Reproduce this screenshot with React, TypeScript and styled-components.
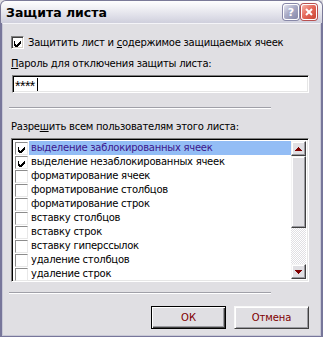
import React from "react";
import styled, { createGlobalStyle } from "styled-components";

const Global = createGlobalStyle`
  html, body { margin: 0; padding: 0; background: #e0dfe3; }
  body { font-family: "DejaVu Sans", Tahoma, sans-serif; }
`;

const Window = styled.div`
  width: 323px;
  height: 337px;
  box-sizing: border-box;
  display: flex;
  flex-direction: column;
  font-family: "DejaVu Sans", Tahoma, sans-serif;
  font-size: 10px;
  letter-spacing: -0.25px;
  color: #000;
`;

const TitleBar = styled.div`
  height: 23px;
  flex: none;
  box-sizing: border-box;
  display: flex;
  align-items: center;
  padding: 0 5px 0 5px;
  border: 1px solid #7b7a98;
  border-bottom: none;
  border-radius: 6px 6px 0 0;
  background: linear-gradient(#fefefe 0%, #f1f1f5 30%, #dedee8 70%, #cfcfdc 100%);
`;

const Title = styled.div`
  flex: 1;
  font-family: "DejaVu Sans", sans-serif;
  font-weight: bold;
  font-size: 12.5px;
  letter-spacing: 0;
  color: #000;
  padding-top: 1px;
`;

const TitleButton = styled.div<{ $kind: "help" | "close" }>`
  width: 16px;
  height: 16px;
  box-sizing: border-box;
  margin-left: 2px;
  border-radius: 3px;
  border: 1px solid #ffffff;
  box-shadow: 0 0 0 1px ${(p) => (p.$kind === "close" ? "#b85050" : "#8888a8")};
  display: flex;
  align-items: center;
  justify-content: center;
  color: #fff;
  font-weight: bold;
  font-size: 11px;
  letter-spacing: 0;
  font-family: "DejaVu Sans", sans-serif;
  background: ${(p) =>
    p.$kind === "close"
      ? "linear-gradient(135deg, #f7b3a8 0%, #e66b5c 45%, #c94434 100%)"
      : "linear-gradient(135deg, #e4e5f0 0%, #a9abc6 45%, #8587a8 100%)"};
`;

const Frame = styled.div`
  flex: 1;
  display: flex;
  border: 2px solid #77769a;
  border-top: none;
`;

const Body = styled.div`
  flex: 1;
  display: flex;
  flex-direction: column;
  background: #e0dfe3;
  border: 1px solid #c8c8d6;
  border-top: 1px solid #f4f4f8;
  padding: 12px 11px 6px 8px;
`;

const CheckRow = styled.label`
  display: flex;
  align-items: center;
  gap: 4px;
  height: 13px;
`;

const Box = styled.span<{ $flat?: boolean }>`
  width: 13px;
  height: 13px;
  flex: none;
  box-sizing: border-box;
  background: #fff;
  display: flex;
  align-items: center;
  justify-content: center;
  border-style: solid;
  border-width: 1px;
  border-color: ${(p) =>
    p.$flat ? "#8c8c8c #e8e8e8 #e8e8e8 #8c8c8c" : "#808080 #ffffff #ffffff #808080"};
  box-shadow: ${(p) => (p.$flat ? "none" : "inset 1px 1px 0 #404040, inset -1px -1px 0 #d4d0c8")};
`;

const Text = styled.span`
  white-space: nowrap;
`;

const FieldLabel = styled.div<{ $top: number }>`
  margin-top: ${(p) => p.$top}px;
  white-space: nowrap;
  line-height: 12px;
`;

const Sunken = styled.div`
  box-sizing: border-box;
  background: #fff;
  border-style: solid;
  border-width: 1px;
  border-color: #808080 #ffffff #ffffff #808080;
  box-shadow: inset 1px 1px 0 #000, inset -1px -1px 0 #e6e6e6;
`;

const PasswordBox = styled(Sunken)`
  margin-top: 5px;
  margin-left: 1px;
  height: 18px;
  width: 297px;
  display: flex;
  align-items: center;
  padding-left: 2px;
`;

const Stars = styled.span`
  font-family: "Liberation Sans", Arial, sans-serif;
  font-size: 14px;
  letter-spacing: -0.5px;
  color: #000;
  line-height: 12px;
  padding-top: 3px;
`;

const Caret = styled.span`
  width: 1px;
  height: 13px;
  background: #000;
  margin-left: 2px;
`;

const Separator = styled.div<{ $top: number }>`
  margin-top: ${(p) => p.$top}px;
  margin-left: -2px;
  width: 262px;
  height: 1px;
  background: #a0a0a8;
  border-bottom: 1px solid #ffffff;
`;

const ListBox = styled(Sunken)`
  margin-top: 5px;
  width: 298px;
  height: 144px;
  padding: 2px;
  display: flex;
`;

const Items = styled.div`
  flex: 1;
  display: flex;
  flex-direction: column;
`;

const Item = styled.div`
  height: 14px;
  display: flex;
  align-items: center;
  padding-left: 1px;
`;

const ItemText = styled.span<{ $selected?: boolean }>`
  flex: 1;
  height: 14px;
  line-height: 14px;
  margin-left: 1px;
  padding-left: 2px;
  white-space: nowrap;
  background: ${(p) => (p.$selected ? "#93bdf5" : "transparent")};
  color: ${(p) => (p.$selected ? "#3c168c" : "#000")};
`;

const ScrollBar = styled.div`
  width: 15px;
  display: flex;
  flex-direction: column;
  background: repeating-conic-gradient(#e0dfe3 0 25%, #ffffff 0 50%) 0 0 / 2px 2px;
`;

const ScrollPart = styled.div<{ $h: number }>`
  height: ${(p) => p.$h}px;
  flex: none;
  box-sizing: border-box;
  background: #e0dfe3;
  border-style: solid;
  border-width: 1px;
  border-color: #f4f4f4 #404040 #404040 #f4f4f4;
  box-shadow: inset -1px -1px 0 #9a9aa0, inset 1px 1px 0 #ffffff;
  display: flex;
  align-items: center;
  justify-content: center;
`;

const Track = styled.div`
  flex: 1;
`;

const ButtonRow = styled.div`
  margin-top: 12px;
  display: flex;
  justify-content: flex-end;
  gap: 8px;
`;

const Button = styled.button<{ $default?: boolean }>`
  width: 75px;
  height: 23px;
  box-sizing: border-box;
  padding: 0;
  font-family: "DejaVu Sans", Tahoma, sans-serif;
  font-size: 10px;
  letter-spacing: -0.1px;
  color: #800000;
  background: #e0dfe3;
  border: 1px solid ${(p) => (p.$default ? "#000" : "transparent")};
  box-shadow: ${(p) =>
    p.$default
      ? "inset 1px 1px 0 #ffffff, inset -1px -1px 0 #404040, inset -2px -2px 0 #9a9aa0"
      : "inset 1px 1px 0 #ffffff, inset -1px -1px 0 #9a9aa0"};
  ${(p) => (!p.$default ? "border-color: #f8f8f8 #404040 #404040 #f8f8f8;" : "")}
`;

const Check = () => (
  <svg width="9" height="9" viewBox="0 0 9 9" shapeRendering="crispEdges">
    <path d="M1 3h1v3h1v1h1v-1h1v-1h1v-1h1v-1h1v3h-1v1h-1v1h-1v1h-1v1h-1v-1h-1v-1h-1z" fill="#000" />
  </svg>
);

const UpArrow = () => (
  <svg width="7" height="4" viewBox="0 0 7 4" shapeRendering="crispEdges">
    <path d="M3 0h1v1h1v1h1v1h1v1H0V3h1V2h1V1h1z" fill="#800000" />
  </svg>
);

const DownArrow = () => (
  <svg width="7" height="4" viewBox="0 0 7 4" shapeRendering="crispEdges">
    <path d="M0 0h7v1H6v1H5v1H4v1H3V3H2V2H1V1H0z" fill="#800000" />
  </svg>
);

const CloseX = () => (
  <svg width="8" height="8" viewBox="0 0 8 8">
    <path d="M1 1L7 7M7 1L1 7" stroke="#fff" strokeWidth="2" />
  </svg>
);

const items: { label: string; checked: boolean; selected?: boolean }[] = [
  { label: "выделение заблокированных ячеек", checked: true, selected: true },
  { label: "выделение незаблокированных ячеек", checked: true },
  { label: "форматирование ячеек", checked: false },
  { label: "форматирование столбцов", checked: false },
  { label: "форматирование строк", checked: false },
  { label: "вставку столбцов", checked: false },
  { label: "вставку строк", checked: false },
  { label: "вставку гиперссылок", checked: false },
  { label: "удаление столбцов", checked: false },
  { label: "удаление строк", checked: false },
];

export default function App() {
  return (
    <>
      <Global />
      <Window>
        <TitleBar>
          <Title>Защита листа</Title>
          <TitleButton $kind="help">?</TitleButton>
          <TitleButton $kind="close">
            <CloseX />
          </TitleButton>
        </TitleBar>
        <Frame>
          <Body>
            <CheckRow>
              <Box>
                <Check />
              </Box>
              <Text>
                Защитить лист и <u>с</u>одержимое защищаемых ячеек
              </Text>
            </CheckRow>
            <FieldLabel $top={9}>
              <u>П</u>ароль для отключения защиты листа:
            </FieldLabel>
            <PasswordBox>
              <Stars>****</Stars>
              <Caret />
            </PasswordBox>
            <Separator $top={14} />
            <FieldLabel $top={12}>
              Разре<u>ш</u>ить всем пользователям этого листа:
            </FieldLabel>
            <ListBox>
              <Items>
                {items.map((it) => (
                  <Item key={it.label}>
                    <Box $flat>{it.checked && <Check />}</Box>
                    <ItemText $selected={it.selected}>{it.label}</ItemText>
                  </Item>
                ))}
              </Items>
              <ScrollBar>
                <ScrollPart $h={15}>
                  <UpArrow />
                </ScrollPart>
                <ScrollPart $h={72} />
                <Track />
                <ScrollPart $h={15}>
                  <DownArrow />
                </ScrollPart>
              </ScrollBar>
            </ListBox>
            <Separator $top={10} />
            <ButtonRow>
              <Button $default>ОК</Button>
              <Button>Отмена</Button>
            </ButtonRow>
          </Body>
        </Frame>
      </Window>
    </>
  );
}
